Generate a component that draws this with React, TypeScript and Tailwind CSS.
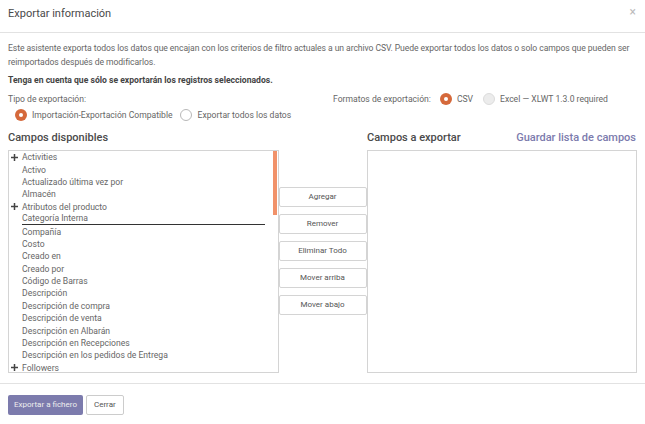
import React from "react";

const fields: { label: string; expand?: boolean; selected?: boolean }[] = [
  { label: "Activities", expand: true },
  { label: "Activo" },
  { label: "Actualizado última vez por" },
  { label: "Almacén" },
  { label: "Atributos del producto", expand: true },
  { label: "Categoría Interna", selected: true },
  { label: "Compañía" },
  { label: "Costo" },
  { label: "Creado en" },
  { label: "Creado por" },
  { label: "Código de Barras" },
  { label: "Descripción" },
  { label: "Descripción de compra" },
  { label: "Descripción de venta" },
  { label: "Descripción en Albarán" },
  { label: "Descripción en Recepciones" },
  { label: "Descripción en los pedidos de Entrega" },
  { label: "Followers", expand: true },
];

function Radio({ checked, disabled }: { checked?: boolean; disabled?: boolean }) {
  if (checked)
    return (
      <span className="w-[12px] h-[12px] rounded-full bg-[#d5693b] flex items-center justify-center shrink-0">
        <span className="block w-[4px] h-[4px] rounded-full bg-white" />
      </span>
    );
  return (
    <span
      className={
        disabled
          ? "block w-[12px] h-[12px] rounded-full bg-[#ececec] border border-[#dcdcdc] shrink-0"
          : "block w-[12px] h-[12px] rounded-full bg-white border border-[#b8b8b8] shrink-0"
      }
    />
  );
}

function Plus() {
  return (
    <svg width="7" height="7" viewBox="0 0 7 7" className="shrink-0">
      <rect x="0" y="2.75" width="7" height="1.5" fill="#444" />
      <rect x="2.75" y="0" width="1.5" height="7" fill="#444" />
    </svg>
  );
}

export default function App() {
  const btn =
    "h-[20px] w-[88px] border border-[#d4d4d4] rounded-[2px] bg-white text-[8px] text-[#555] flex items-center justify-center";
  return (
    <div
      className="w-[645px] h-[424px] bg-white text-[#666] overflow-hidden"
      style={{ fontFamily: "Roboto, 'Noto Sans', sans-serif" }}
    >
      {/* header */}
      <div className="h-[33px] border-b border-[#e2e2e2] flex items-center justify-between pl-2 pr-[9px]">
        <span className="text-[11px] text-[#4a4a4a] leading-none mb-[6px]">Exportar información</span>
        <span className="text-[12px] text-[#bbb] leading-none mb-[9px]">×</span>
      </div>

      {/* body */}
      <div className="px-2 pt-[8px]">
        <p className="w-[634px] text-[8.6px] leading-[14px] tracking-[-0.07px] text-[#666]">
          Este asistente exporta todos los datos que encajan con los criterios de filtro actuales a un archivo CSV. Puede exportar todos los datos o solo campos que pueden ser reimportados después de modificarlos.
        </p>
        <p className="text-[8.6px] leading-[14px] font-bold text-[#444] mt-[4px]">
          Tenga en cuenta que sólo se exportarán los registros seleccionados.
        </p>

        <div className="flex mt-[5px]">
          <div className="w-[325px]">
            <div className="text-[8.6px] leading-[14px]">Tipo de exportación:</div>
            <div className="flex items-center mt-[2px] pl-[7px] text-[8.6px] leading-[14px]">
              <Radio checked />
              <span className="ml-[5px]">Importación-Exportación Compatible</span>
              <span className="ml-[7px]">
                <Radio />
              </span>
              <span className="ml-[6px]">Exportar todos los datos</span>
            </div>
          </div>
          <div className="flex items-start text-[8.6px] leading-[14px]">
            <span>Formatos de exportación:</span>
            <span className="flex items-center ml-[9px] h-[14px]">
              <Radio checked />
              <span className="ml-[5px]">CSV</span>
              <span className="ml-[10px]">
                <Radio disabled />
              </span>
              <span className="ml-[5px]">Excel — XLWT 1.3.0 required</span>
            </span>
          </div>
        </div>

        {/* headings */}
        <div className="flex mt-[6px] items-end h-[15px]">
          <div className="w-[359px] text-[11px] font-medium text-[#4a4a4a] leading-none">Campos disponibles</div>
          <div className="flex-1 flex justify-between pr-[1px] text-[11px] font-medium leading-none">
            <span className="text-[#4a4a4a]">Campos a exportar</span>
            <span className="text-[#7c7bad]">Guardar lista de campos</span>
          </div>
        </div>

        {/* lists */}
        <div className="flex mt-[7px]">
          <div className="w-[271px] h-[223px] border border-[#d4d4d4] relative overflow-hidden">
            <div className="absolute right-[1px] top-[0px] w-[4px] h-[64px] bg-[#f1926a]" />
            {fields.map((f) => (
              <div key={f.label} className="flex items-center h-[12.4px] text-[8.6px] text-[#666] pl-[2px]">
                <span className="w-[11px] flex justify-start">{f.expand ? <Plus /> : null}</span>
                <span
                  className={
                    f.selected
                      ? "border-b border-[#333] w-[243px] leading-[11px]"
                      : "leading-[12px]"
                  }
                >
                  {f.label}
                </span>
              </div>
            ))}
          </div>
          <div className="w-[88px] flex flex-col gap-[7px] pt-[37px]">
            <button className={btn}>Agregar</button>
            <button className={btn}>Remover</button>
            <button className={btn}>Eliminar Todo</button>
            <button className={btn}>Mover arriba</button>
            <button className={btn}>Mover abajo</button>
          </div>
          <div className="w-[271px] h-[223px] border border-[#d4d4d4]" />
        </div>
      </div>

      {/* footer */}
      <div className="border-t border-[#e2e2e2] mt-[10px] px-2 pt-[11px] flex gap-[3px]">
        <button className="h-[20px] px-[6px] rounded-[2px] bg-[#7c7bad] text-[8px] text-[#eee]">
          Exportar a fichero
        </button>
        <button className="h-[20px] px-[7px] rounded-[2px] border border-[#ccc] bg-white text-[8px] text-[#555]">
          Cerrar
        </button>
      </div>
    </div>
  );
}
